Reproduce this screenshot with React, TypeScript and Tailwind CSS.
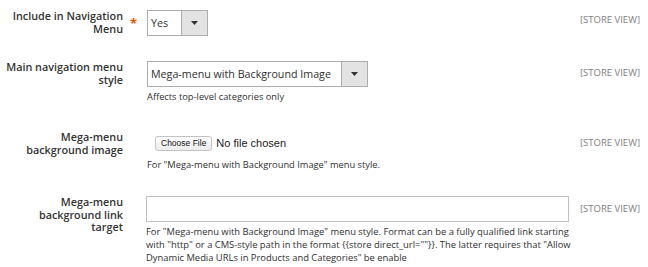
import React from "react";

const font = { fontFamily: '"Open Sans", "Liberation Sans", sans-serif' };

function Arrow() {
  return (
    <svg width="7" height="4" viewBox="0 0 7 4">
      <path d="M0 0 L7 0 L3.5 4 Z" fill="#333" />
    </svg>
  );
}

function Select({ w, text }: { w: string; text: string }) {
  return (
    <div className={`flex h-[26px] ${w} border border-[#adadad] bg-white`}>
      <div className="flex-1 pl-[3px] text-[10.7px] leading-[24px] text-[#303030] whitespace-nowrap">
        {text}
      </div>
      <div className="flex w-[26px] items-center justify-center border-l border-[#adadad] bg-[#e3e3e3]">
        <Arrow />
      </div>
    </div>
  );
}

function Scope({ pt }: { pt: string }) {
  return (
    <div className={`ml-[11px] ${pt} text-[9.5px] leading-[12px] text-[#808080] whitespace-nowrap`}>
      [STORE VIEW]
    </div>
  );
}

function Label({ children }: { children: React.ReactNode }) {
  return (
    <div className="w-[123px] shrink-0 text-right text-[10.8px] font-semibold leading-[12.5px] text-[#333]">
      {children}
    </div>
  );
}

export default function App() {
  return (
    <div className="h-[267px] w-[648px] bg-white" style={font}>
      <div className="flex flex-col pt-[10px]">
        {/* Row 1 */}
        <div className="flex items-start">
          <Label>
            Include in Navigation
            <br />
            Menu
          </Label>
          <div className="relative w-[24px] shrink-0">
            <span className="absolute left-[7px] top-[7px] text-[13px] font-bold leading-[13px] text-[#eb5202]">*</span>
          </div>
          <div className="w-[422px] shrink-0">
            <Select w="w-[61px]" text="Yes" />
          </div>
          <Scope pt="pt-[4px]" />
        </div>

        {/* Row 2 */}
        <div className="mt-[25px] flex items-start">
          <Label>
            Main navigation menu
            <br />
            style
          </Label>
          <div className="w-[24px] shrink-0" />
          <div className="w-[422px] shrink-0">
            <Select w="w-[221px]" text="Mega-menu with Background Image" />
            <div className="mt-[3px] text-[9.3px] leading-[13px] text-[#303030]">
              Affects top-level categories only
            </div>
          </div>
          <Scope pt="pt-[6px]" />
        </div>

        {/* Row 3 */}
        <div className="mt-[28px] flex items-start">
          <Label>
            Mega-menu
            <br />
            background image
          </Label>
          <div className="w-[24px] shrink-0" />
          <div className="w-[422px] shrink-0">
            <div className="flex h-[25px] items-center pl-[8px]" style={{ fontFamily: '"Liberation Sans", Arial, sans-serif' }}>
              <div className="flex h-[15px] items-center rounded-[3px] border border-[#c3c3c3] bg-gradient-to-b from-white to-[#ececec] px-[5px] text-[8.5px] text-[#111]">
                Choose File
              </div>
              <span className="ml-[4px] text-[11px] text-[#222]">No file chosen</span>
            </div>
            <div className="mt-[2px] text-[9.3px] leading-[13px] text-[#303030]">
              For "Mega-menu with Background Image" menu style.
            </div>
          </div>
          <Scope pt="pt-[6px]" />
        </div>

        {/* Row 4 */}
        <div className="mt-[25px] flex items-start">
          <Label>
            Mega-menu
            <br />
            background link
            <br />
            target
          </Label>
          <div className="w-[23px] shrink-0" />
          <div className="w-[423px] shrink-0">
            <div className="h-[26px] w-[423px] border border-[#c2c2c2] bg-white" />
            <div className="mt-[3px] text-[9.4px] leading-[13px] text-[#303030] whitespace-nowrap">
              For "Mega-menu with Background Image" menu style. Format can be a fully qualified link starting
              <br />
              with "http" or a CMS-style path in the format {'{{store direct_url=""}}'}. The latter requires that "Allow
              <br />
              Dynamic Media URLs in Products and Categories" be enable
            </div>
          </div>
          <Scope pt="pt-[7px]" />
        </div>
      </div>
    </div>
  );
}
